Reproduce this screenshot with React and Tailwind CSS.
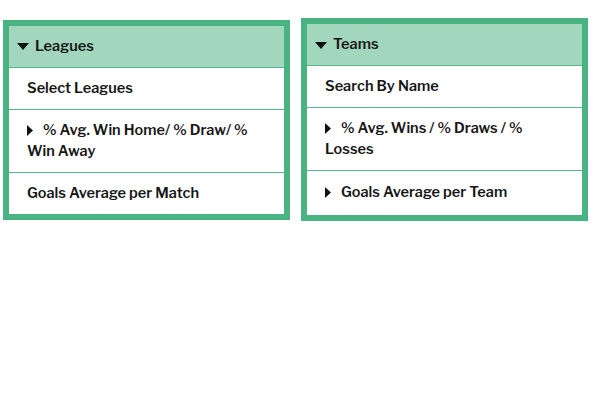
import React from "react";

const font = { fontFamily: '"Libre Franklin", Inter, "Liberation Sans", sans-serif' };

const Down = () => (
  <svg width="12" height="7" viewBox="0 0 12 7" className="shrink-0">
    <path d="M0 0 H12 L6 7 Z" fill="#111" />
  </svg>
);

const Right = () => (
  <svg width="6" height="11" viewBox="0 0 6 11" className="inline-block align-[-1px] mr-[10px]">
    <path d="M0 0 L6 5.5 L0 11 Z" fill="#111" />
  </svg>
);

const Row = ({ children, arrow, tall }) => (
  <div
    className={`border-t border-[#58b98b] px-[18px] ${tall ? "pt-[11px] pb-[12px]" : "py-[10px]"} text-[14.5px] leading-[21px] font-semibold text-[#161616]`}
  >
    {arrow && <Right />}
    {children}
  </div>
);

const Panel = ({ title, rows }) => (
  <div className="w-[287px] border-[6px] border-[#49b482] bg-white">
    <div className="h-[41px] bg-[#a2d6bd] flex items-center gap-[6px] pl-2 pt-[1px] text-[14.5px] font-semibold text-[#161616]">
      <Down />
      <span>{title}</span>
    </div>
    {rows.map((r, i) => (
      <Row key={i} arrow={r.arrow} tall={r.tall}>
        {r.text}
      </Row>
    ))}
  </div>
);

export default function App() {
  return (
    <div className="w-[600px] h-[408px] bg-white" style={font}>
      <div className="flex items-center gap-[11px] pl-[3px] pt-[18px]">
        <Panel
          title="Leagues"
          rows={[
            { text: "Select Leagues" },
            { text: "% Avg. Win Home/ % Draw/ % Win Away", arrow: true },
            { text: "Goals Average per Match" },
          ]}
        />
        <Panel
          title="Teams"
          rows={[
            { text: "Search By Name" },
            { text: "% Avg. Wins / % Draws / % Losses", arrow: true },
            { text: "Goals Average per Team", arrow: true, tall: true },
          ]}
        />
      </div>
    </div>
  );
}
